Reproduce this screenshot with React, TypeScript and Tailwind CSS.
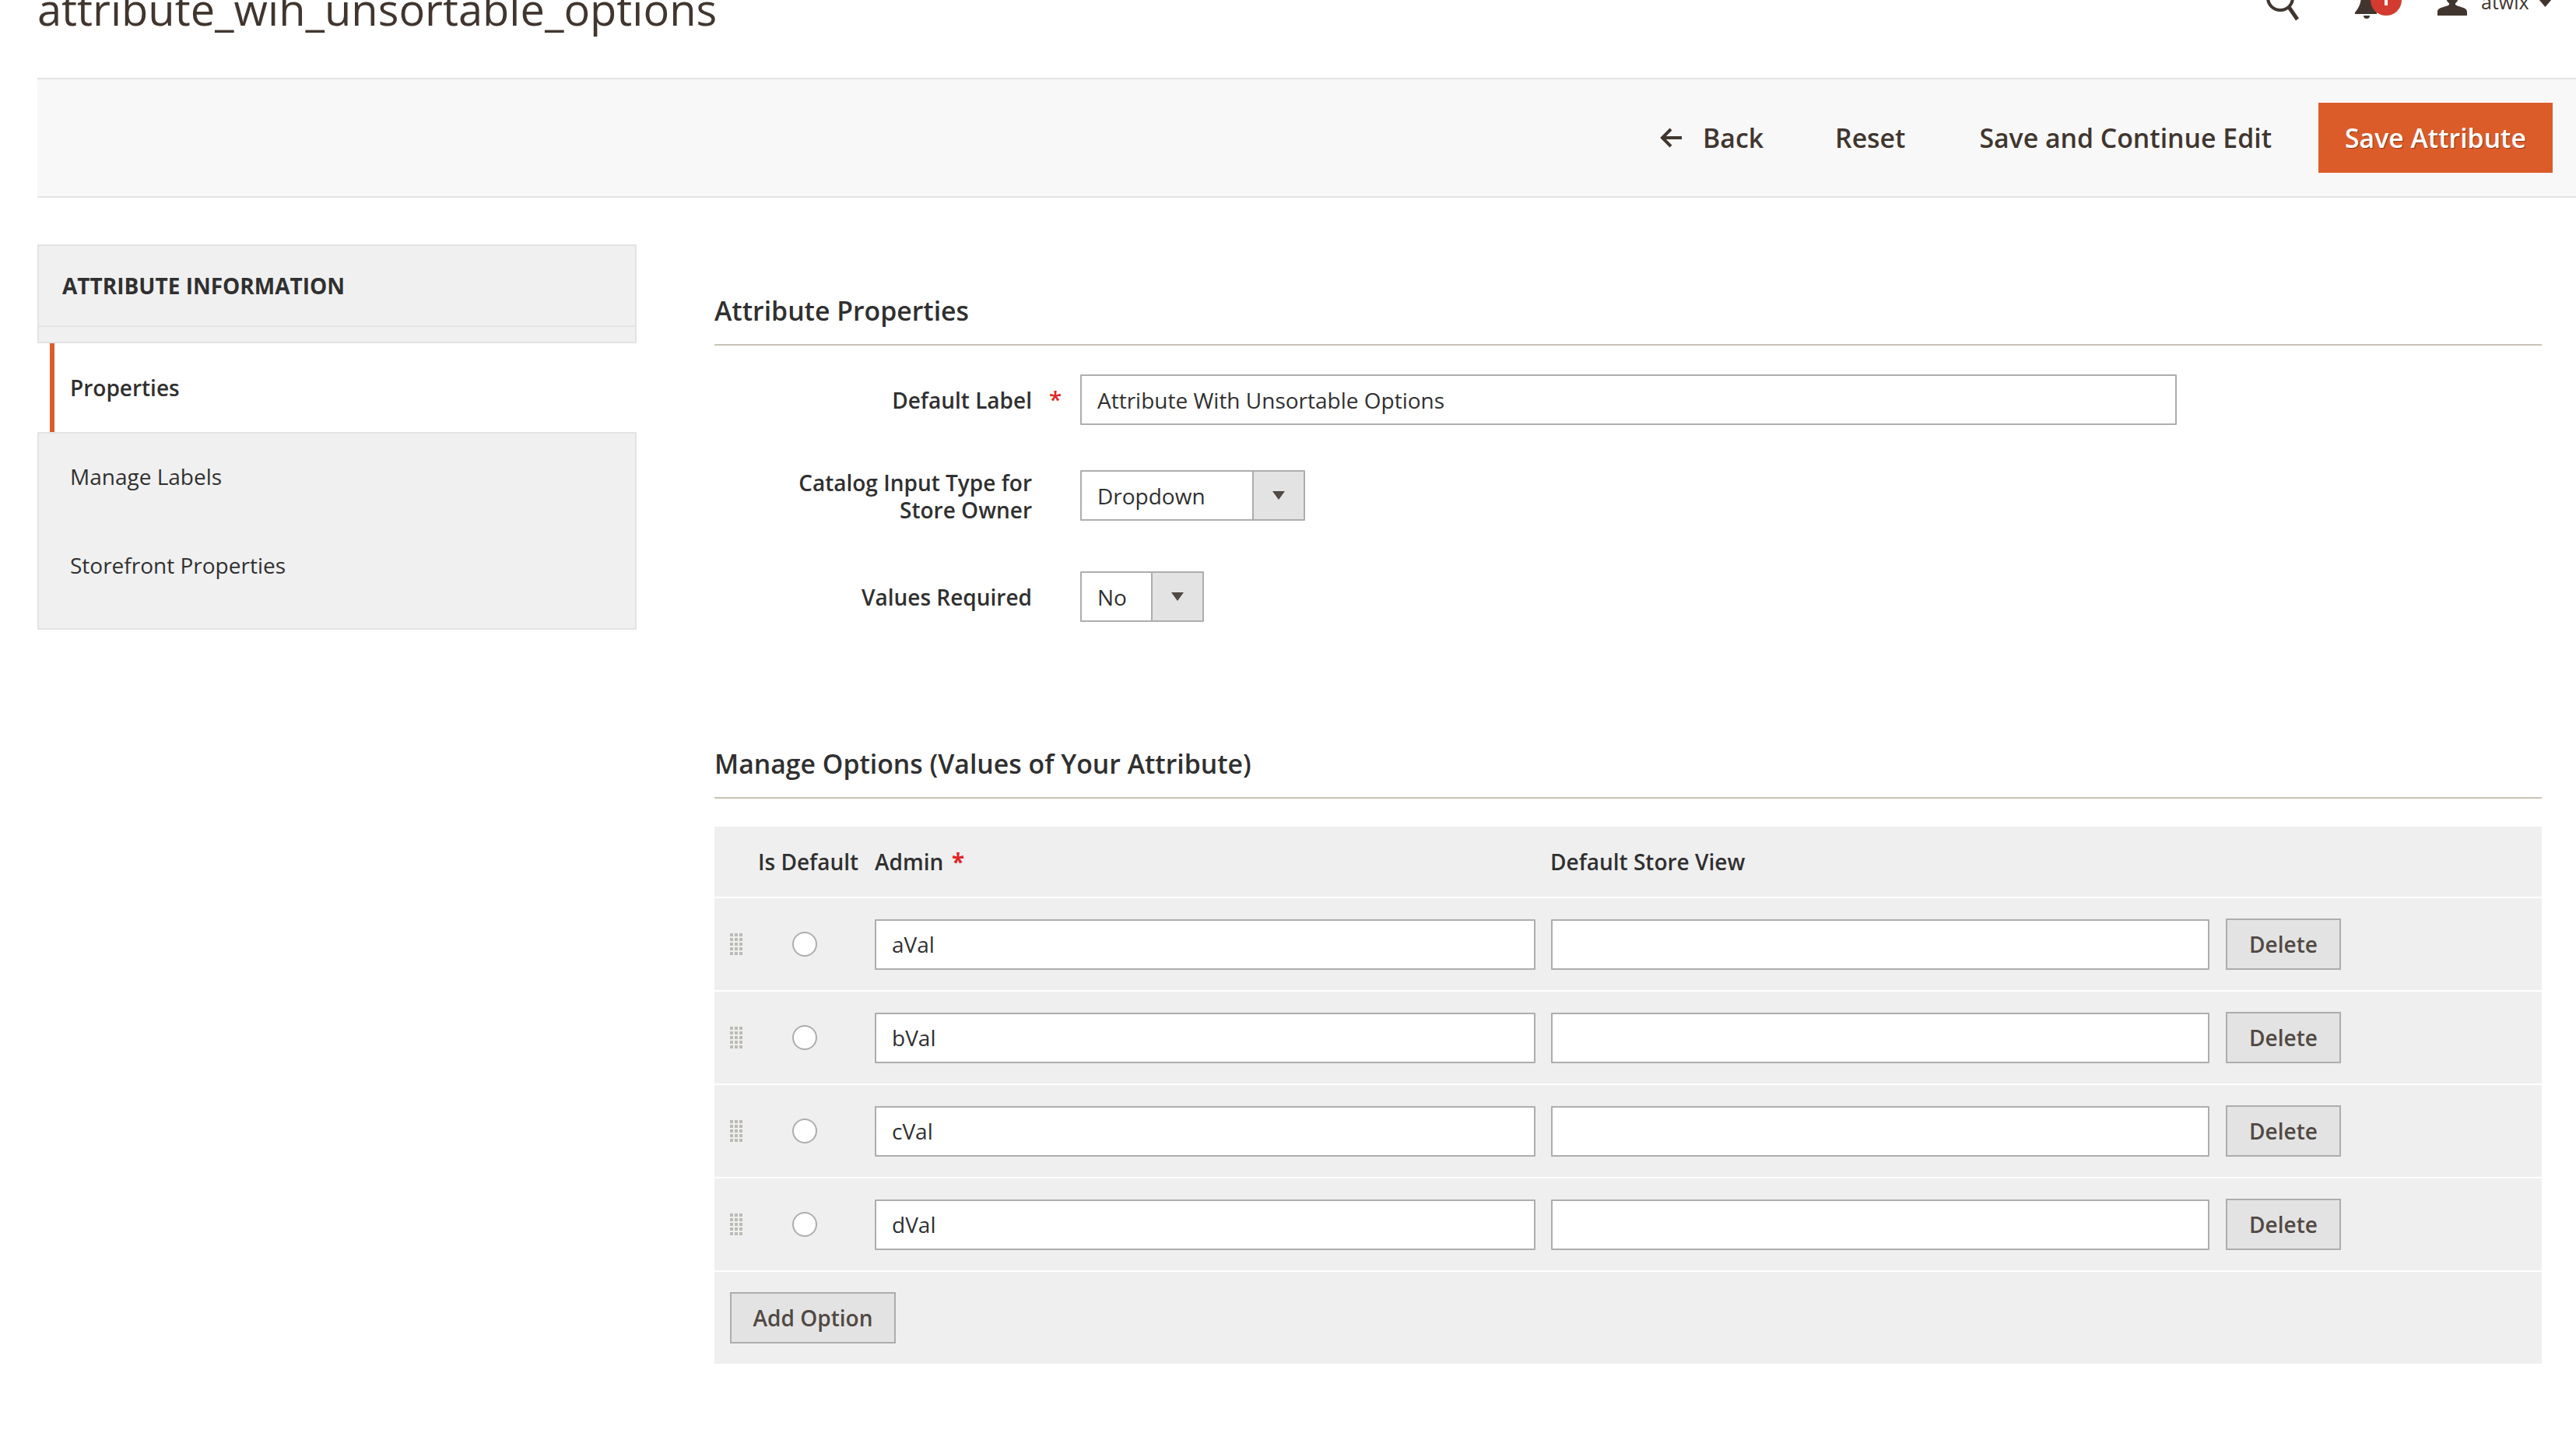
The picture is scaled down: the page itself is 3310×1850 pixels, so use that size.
const font = "font-['Open_Sans',sans-serif]"

const options = ["aVal", "bVal", "cVal", "dVal"]

function DragHandle() {
  return (
    <svg width="16" height="28" viewBox="0 0 16 28" fill="#bdbab5">
      {[0, 6, 12, 18, 24].map((y) =>
        [0, 6, 12].map((x) => <rect key={`${x}-${y}`} x={x} y={y} width="4" height="4" />)
      )}
    </svg>
  )
}

function SelectBox({ label, width, textWidth }: { label: string; width: string; textWidth: string }) {
  return (
    <div className={`flex h-[65px] ${width} border-2 border-[#adadad] rounded-[1px] bg-white`}>
      <div className={`flex items-center ${textWidth} pl-[20px] text-[28px] text-[#303030]`}>{label}</div>
      <div className="flex flex-1 items-center justify-center border-l-2 border-[#adadad] bg-[#e3e3e3]">
        <svg width="16" height="11" viewBox="0 0 16 11" fill="#514943">
          <path d="M0 0h16l-8 11z" />
        </svg>
      </div>
    </div>
  )
}

function TextBox({ value, width }: { value: string; width: string }) {
  return (
    <div className={`flex h-[65px] ${width} items-center border-2 border-[#adadad] rounded-[1px] bg-white pl-[20px] text-[28px] text-[#303030]`}>
      {value}
    </div>
  )
}

function GreyButton({ label, width }: { label: string; width: string }) {
  return (
    <button className={`flex h-[66px] ${width} items-center justify-center border-2 border-[#adadad] bg-[#e3e3e3] text-[28px] font-semibold text-[#514943]`}>
      {label}
    </button>
  )
}

function Header() {
  return (
    <header className="flex h-[100px] justify-between overflow-hidden">
      <h1 className="mt-[-29px] text-[56px] leading-[80px] font-normal whitespace-nowrap text-[#41362f]">
        attribute_wih_unsortable_options
      </h1>
      <div className="flex items-start pr-[31px]">
        <svg width="44" height="28" viewBox="0 0 44 28" fill="none" stroke="#41362f" strokeWidth="4">
          <circle cx="18" cy="-3" r="16" />
          <path d="M29 9l11 16" strokeWidth="5" />
        </svg>
        <svg className="ml-[68px]" width="64" height="24" viewBox="0 0 64 24">
          <path d="M10 -6h14c0 10 2 16 6 22v2H2v-2c5-6 8-12 8-22z" fill="#41362f" />
          <path d="M13 20h8a4 4 0 0 1-8 0z" fill="#41362f" />
          <circle cx="42" cy="0" r="20" fill="#d33b30" />
          <rect x="40" y="0" width="4" height="7" fill="#fff" />
        </svg>
        <svg className="ml-[44px]" width="38" height="20" viewBox="0 0 38 20" fill="#41362f">
          <path d="M11 -4h16c0 4-2 7-4 8v2c3 3 15 3 15 9v5H0v-5c0-6 12-6 15-9V4c-2-1-4-4-4-8z" />
        </svg>
        <span className="mt-[-16px] ml-[18px] w-[60px] text-[25px] leading-[36px] text-[#41362f]">atwix</span>
        <svg className="ml-[14px]" width="17" height="9" viewBox="0 0 17 9" fill="#41362f">
          <path d="M0 -1h17L8.5 9z" />
        </svg>
      </div>
    </header>
  )
}

function Toolbar() {
  return (
    <div className="flex h-[154px] items-center justify-end border-y-2 border-[#e3e3e3] bg-[#f8f8f8] pr-[30px] text-[33.8px] font-semibold text-[#41362f]">
      <svg width="30" height="26" viewBox="0 0 30 26" fill="none" stroke="#41362f" strokeWidth="4">
        <path d="M28 13H4M14 2L3 13l11 11" />
      </svg>
      <span className="ml-[25px]">Back</span>
      <span className="ml-[92px]">Reset</span>
      <span className="ml-[95px]">Save and Continue Edit</span>
      <button className="ml-[60px] flex h-[90px] w-[301px] items-center justify-center bg-[#dc5c29] text-white [text-shadow:1px_1px_0_#8a3a1a]">
        Save Attribute
      </button>
    </div>
  )
}

function Sidebar() {
  return (
    <aside className="mt-[60px] w-[770px] text-[28px]">
      <div className="h-[127px] rounded-[1px] border-2 border-[#e3e3e3] bg-[#f0f0f0]">
        <div className="flex h-[104px] items-center border-b-2 border-[#e3e3e3] pl-[30px] font-bold text-[#303030]">
          ATTRIBUTE INFORMATION
        </div>
      </div>
      <div className="ml-[16px] flex h-[114px] items-center border-l-[6px] border-[#dc5c29] bg-white pl-[20px] font-semibold text-[#303030]">
        Properties
      </div>
      <div className="flex h-[254px] flex-col rounded-[1px] border-2 border-[#e3e3e3] bg-[#f0f0f0] pl-[40px] text-[#303030]">
        <div className="flex h-[110px] items-center">Manage Labels</div>
        <div className="flex h-[118px] items-center">Storefront Properties</div>
      </div>
    </aside>
  )
}

function AttributeProperties() {
  return (
    <section className="mt-[103px]">
      <h2 className="flex h-[87px] items-end border-b-2 border-[#cac3b4] pb-[20px] text-[33.8px] leading-[46px] font-semibold text-[#303030]">
        Attribute Properties
      </h2>
      <div className="mt-[37px] flex h-[65px] items-center">
        <div className="w-[408px] text-right text-[28px] font-semibold text-[#303030]">Default Label</div>
        <div className="ml-[22px] w-[40px] text-[29.5px] font-semibold text-[#e22626]">*</div>
        <TextBox value="Attribute With Unsortable Options" width="w-[1409px]" />
      </div>
      <div className="mt-[58px] flex h-[65px] items-center">
        <div className="w-[408px] pt-[3px] text-right text-[28px] leading-[35px] font-semibold text-[#303030]">
          Catalog Input Type for
          <br />
          Store Owner
        </div>
        <div className="ml-[62px]">
          <SelectBox label="Dropdown" width="w-[289px]" textWidth="w-[219px]" />
        </div>
      </div>
      <div className="mt-[65px] flex h-[65px] items-center">
        <div className="w-[408px] text-right text-[28px] font-semibold text-[#303030]">Values Required</div>
        <div className="ml-[62px]">
          <SelectBox label="No" width="w-[159px]" textWidth="w-[89px]" />
        </div>
      </div>
    </section>
  )
}

function ManageOptions() {
  return (
    <section className="mt-[147px]">
      <h2 className="flex h-[80px] items-end border-b-2 border-[#cac3b4] pb-[20px] text-[33.8px] leading-[46px] font-semibold text-[#303030]">
        Manage Options (Values of Your Attribute)
      </h2>
      <div className="mt-[36px] flex flex-col gap-[2px] text-[28px]">
        <div className="flex h-[90px] items-center bg-[#efefef] font-semibold text-[#303030]">
          <span className="ml-[56px] w-[150px]">Is Default</span>
          <span className="w-[99px]">Admin</span>
          <span className="w-[769px] text-[29.5px] font-bold text-[#e22626]">*</span>
          <span>Default Store View</span>
        </div>
        {options.map((value) => (
          <div key={value} className="flex h-[118px] items-center bg-[#efefef]">
            <div className="ml-[20px]">
              <DragHandle />
            </div>
            <div className="ml-[64px] h-[32px] w-[32px] rounded-full border-2 border-[#adadad] bg-white" />
            <div className="ml-[74px]">
              <TextBox value={value} width="w-[849px]" />
            </div>
            <div className="ml-[20px]">
              <TextBox value="" width="w-[846px]" />
            </div>
            <div className="ml-[21px]">
              <GreyButton label="Delete" width="w-[148px]" />
            </div>
          </div>
        ))}
        <div className="flex h-[118px] items-center bg-[#efefef] pl-[20px]">
          <GreyButton label="Add Option" width="w-[213px]" />
        </div>
      </div>
    </section>
  )
}

export default function App() {
  return (
    <div className={`${font} h-[1850px] w-[3310px] overflow-hidden bg-white pl-[48px]`}>
      <Header />
      <Toolbar />
      <div className="flex">
        <Sidebar />
        <main className="ml-[100px] w-[2348px]">
          <AttributeProperties />
          <ManageOptions />
        </main>
      </div>
    </div>
  )
}
